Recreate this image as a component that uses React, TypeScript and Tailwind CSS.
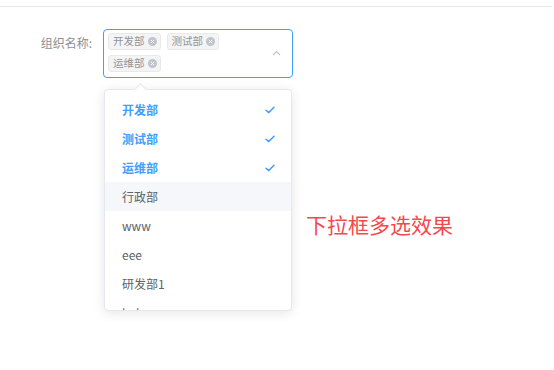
import React from "react";

const font = { fontFamily: '"Noto Sans CJK SC", "Noto Sans", sans-serif' };

function Tag({ label }: { label: string }) {
  return (
    <span className="inline-flex h-[17px] items-center gap-[3px] rounded-[3px] border border-[#e9e9eb] bg-[#f4f4f5] pl-[4px] pr-[3px] text-[10.5px] leading-none text-[#909399]">
      {label}
      <span className="flex h-[9px] w-[9px] items-center justify-center rounded-full bg-[#c0c4cc]">
        <svg width="5" height="5" viewBox="0 0 6 6">
          <path d="M1 1L5 5M5 1L1 5" stroke="#fff" strokeWidth="1.2" />
        </svg>
      </span>
    </span>
  );
}

function Check() {
  return (
    <svg width="10" height="8" viewBox="0 0 10 8">
      <path d="M1 4.2L3.8 6.6L9 1.2" fill="none" stroke="#409eff" strokeWidth="1.5" strokeLinecap="round" strokeLinejoin="round" />
    </svg>
  );
}

const items = [
  { t: "开发部", sel: true },
  { t: "测试部", sel: true },
  { t: "运维部", sel: true },
  { t: "行政部", hover: true },
  { t: "www" },
  { t: "eee" },
  { t: "研发部1" },
  { t: "hghg" },
];

export default function App() {
  return (
    <div className="relative h-[370px] w-[554px] overflow-hidden bg-white" style={font}>
      <div className="mt-[6px] h-px w-[552px] bg-[#e6e6e6]" />
      <div className="mt-[22px] flex items-start">
        <div className="w-[93px] pt-[6px] pr-[1px] text-right text-[12px] leading-[16px] text-[#8c8f94]">组织名称:</div>
        <div className="relative ml-[10px] flex h-[49px] w-[190px] rounded-[4px] border border-[#409eff] pl-[4px] pt-[3px]">
          <div className="flex w-[150px] flex-wrap gap-x-[6px] gap-y-[5px] content-start">
            <Tag label="开发部" />
            <Tag label="测试部" />
            <Tag label="运维部" />
          </div>
          <svg className="absolute right-[11px] top-[20px]" width="9" height="6" viewBox="0 0 9 6">
            <path d="M1 5L4.5 1.5L8 5" fill="none" stroke="#c0c4cc" strokeWidth="1.2" />
          </svg>
        </div>
      </div>

      <div className="absolute left-[104px] top-[89px] h-[222px] w-[188px] rounded-[4px] border border-[#e4e7ed] bg-white shadow-[0_2px_12px_rgba(0,0,0,0.1)]">
        <div className="absolute -top-[5px] left-[31px] h-[9px] w-[9px] rotate-45 border-l border-t border-[#e4e7ed] bg-white" />
        <div className="relative h-full overflow-hidden rounded-[4px] py-[5px]">
          {items.map((it) => (
            <div
              key={it.t}
              className={`flex h-[29px] items-center justify-between pl-[17px] pr-[16px] text-[12px] ${
                it.hover ? "bg-[#f5f7fa]" : ""
              } ${it.sel ? "font-bold text-[#409eff]" : "text-[#606266]"}`}
            >
              <span>{it.t}</span>
              {it.sel && <Check />}
            </div>
          ))}
        </div>
      </div>

      <div className="absolute left-[306px] top-[210px] text-[21px] leading-[28px] text-[#f5484d]">下拉框多选效果</div>
    </div>
  );
}
